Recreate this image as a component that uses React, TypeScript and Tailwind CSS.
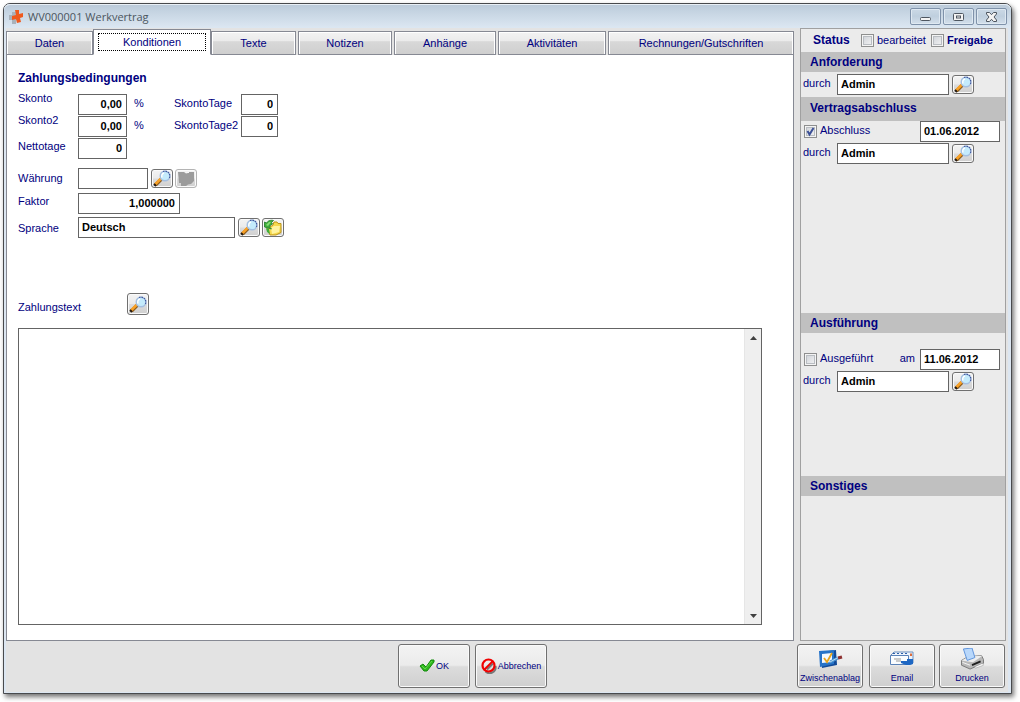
import { useId, useState } from 'react';
import type { ReactNode } from 'react';
import clsx from 'clsx';

const tabs = [
  { name: 'Daten', size: 'w-[87px]' },
  { name: 'Konditionen', size: 'w-[118px]' },
  { name: 'Texte', size: 'w-[85px]' },
  { name: 'Notizen', size: 'w-[94px] ml-0.5' },
  { name: 'Anhänge', size: 'w-[102px] ml-0.5' },
  { name: 'Aktivitäten', size: 'w-[108px] ml-0.5' },
  { name: 'Rechnungen/Gutschriften', size: 'flex-1 ml-0.5' },
];

const face = 'bg-[linear-gradient(#f3f3f3,#ebebeb_48%,#dcdcdc_52%,#cfcfcf)]';

export default function App() {
  const [tab, setTab] = useState('Konditionen');

  return (
    <div className="min-h-screen flex bg-white pt-[3px] pl-[3px] pr-2 pb-2 font-['Liberation_Sans',Arial,sans-serif] text-[11px] leading-3 text-[#000080]">
      <div className="flex-1 min-w-0 flex flex-col rounded-t-[7px] border border-[#484a4d] bg-[#dce6f1] shadow-[2px_3px_5px_rgba(0,0,0,0.55)]">
        <TitleBar />
        <div className="flex-1 flex flex-col ml-0.5 mr-[3px] mb-px bg-[#e3e3e3]">
          <div className="flex-1 flex gap-1.5 pr-0.5">
            <main className="flex-1 min-w-0 flex flex-col">
              <div role="tablist" className="flex items-end h-[27px] pt-px">
                {tabs.map((t) => (
                  <button
                    key={t.name}
                    type="button"
                    role="tab"
                    aria-selected={tab === t.name}
                    onClick={() => setTab(t.name)}
                    className={clsx(
                      'border border-[#868993]',
                      t.size,
                      tab === t.name
                        ? 'h-[26px] bg-white border-b-white p-1 pt-[3px]'
                        : 'h-6 shadow-[inset_1px_1px_0_#fff,inset_-1px_0_0_#fff] bg-[linear-gradient(#f3f3f3,#ebebeb_40%,#d8d8d8_44%,#cfcfcf)]',
                    )}
                  >
                    {tab === t.name ? (
                      <span className="block border border-dotted border-black leading-4">{t.name}</span>
                    ) : (
                      t.name
                    )}
                  </button>
                ))}
              </div>
              <Conditions />
            </main>
            <Sidebar />
          </div>
          <Footer />
        </div>
      </div>
    </div>
  );
}

function TitleBar() {
  return (
    <header className="flex items-start justify-between h-6 pl-[5px] pr-1 rounded-t-md bg-[linear-gradient(#b9c9d8,#c3d2e0_25%,#dce7f2)] shadow-[inset_0_1px_0_#e8eff6]">
      <div className="flex items-center h-[26px] gap-[5px]">
        <svg width="14" height="16" viewBox="0 0 14 16" aria-hidden="true">
          <path d="M3 3h4v3h3v5H7v4H3v-4H0V6h3z" fill="#a9b2bb" />
          <path d="M6 1h4v4l4-1v4l-3 1 1 4-4 1-1-4-4 1V7l4-1z" fill="#ef5a1e" />
        </svg>
        <h1 className="font-['Open_Sans','Noto_Sans',sans-serif] text-[11px] leading-4 text-[#4c5660]">WV000001 Werkvertrag</h1>
      </div>
      <div className="flex gap-0.5 pt-1">
        <WindowButton label="Minimieren">
          <rect x="1.5" y="6.5" width="10" height="3" rx="1" />
        </WindowButton>
        <WindowButton label="Maximieren">
          <rect x="1.5" y="2.5" width="10" height="7" rx="1" />
          <rect x="4.5" y="5" width="4" height="2" />
        </WindowButton>
        <WindowButton label="Schließen">
          <path d="M1.5 1.500h3l2 2.200 2-2.200h3v1.500L9 6l2.500 3v1.500h-3l-2-2.200-2 2.200h-3V9L4 6 1.500 3z" />
        </WindowButton>
      </div>
    </header>
  );
}

function WindowButton({ label, children }: { label: string; children: ReactNode }) {
  return (
    <button
      type="button"
      aria-label={label}
      className="flex items-center justify-center w-[31px] h-[17px] rounded-[2px] border border-[#7f92aa] bg-[linear-gradient(#cbd9e6,#bfcfde_48%,#d3dfeb)] shadow-[inset_0_0_0_1px_#dfe9f2]"
    >
      <svg width="13" height="12" viewBox="0 0 13 12" fill="#f4f4f4" stroke="#4e5660" strokeWidth="1">
        {children}
      </svg>
    </button>
  );
}

function Conditions() {
  return (
    <section className="flex-1 flex flex-col bg-white border border-t-0 border-[#868993] pt-[15px] pl-[11px] pr-[31px] pb-[15px]">
      <h2 className="text-[12px] leading-4 font-bold">Zahlungsbedingungen</h2>
      <div className="flex items-start mt-2">
        <div className="flex flex-col w-[60px] -mt-0.5">
          <label htmlFor="skonto">Skonto</label>
          <label htmlFor="skonto2" className="mt-2.5">Skonto2</label>
          <label htmlFor="netto" className="mt-3.5">Nettotage</label>
          <label htmlFor="waehrung" className="mt-5">Währung</label>
          <label htmlFor="faktor" className="mt-[11px]">Faktor</label>
          <label htmlFor="sprache" className="mt-[15px]">Sprache</label>
        </div>
        <div className="flex flex-col">
          <div className="flex">
            <Field id="skonto" value="0,00" className="w-[49px] text-right" />
            <span className="w-10 ml-[7px] pt-[3px]">%</span>
            <label htmlFor="tage" className="w-[67px] pt-[3px]">SkontoTage</label>
            <Field id="tage" value="0" className="w-[37px] text-right" />
          </div>
          <div className="flex mt-px">
            <Field id="skonto2" value="0,00" className="w-[49px] text-right" />
            <span className="w-10 ml-[7px] pt-[3px]">%</span>
            <label htmlFor="tage2" className="w-[67px] pt-[3px]">SkontoTage2</label>
            <Field id="tage2" value="0" className="w-[37px] text-right" />
          </div>
          <Field id="netto" value="0" className="w-[49px] text-right mt-px" />
          <div className="flex items-center gap-0.5 mt-[9px]">
            <Field id="waehrung" value="" className="w-[70px] mr-px" />
            <SearchButton label="Währung suchen" />
            <IconButton label="Währung übernehmen" disabled>
              <path d="M2 2h6l2 1.500 2-.5 1-1h5v9l-3 3-3 .5L10 16H5v-3H3z" fill="#9b9b9b" />
              <path d="M10 2.500h3" stroke="#f5f5f5" fill="none" />
            </IconButton>
          </div>
          <Field id="faktor" value="1,000000" className="w-[102px] text-right mt-1" />
          <div className="flex items-center gap-0.5 mt-[3px]">
            <Field id="sprache" value="Deutsch" className="w-[157px] mr-px" />
            <SearchButton label="Sprache suchen" />
            <IconButton label="Sprache übernehmen">
              <path d="M4 10l6-4 1-3h3l1 1.500h3v9l-5 2.500H7z" fill="#f6d94e" stroke="#bd9418" />
              <path d="M8 9l3-2h6l-1 6-7 2z" fill="#fff3a0" />
              <path d="M1.500 8V3l2 1c2-3 5-3 7-2.500l-2 2 1 1.500-2 1-1 2 2 2z" fill="#3fae3a" stroke="#217a28" strokeWidth=".8" />
              <path d="M3 6l3-3h2L5 7z" fill="#86dd75" />
              <path d="M3 9l3 1 1 5-3-2z" fill="#3fae3a" />
            </IconButton>
          </div>
        </div>
      </div>
      <div className="flex items-end mt-[55px]">
        <label htmlFor="text" className="w-[109px] pb-0.5">Zahlungstext</label>
        <SearchButton label="Zahlungstext suchen" tall />
      </div>
      <div className="flex-1 flex mt-[13px] border border-[#646464] bg-white">
        <textarea id="text" className="flex-1 min-w-0 resize-none p-1 text-black outline-none" />
        <div className="flex flex-col justify-between w-[17px] bg-[#efefef] border-l border-[#e6e6e6]">
          <button type="button" aria-label="Nach oben" className="flex items-center justify-center h-[17px]">
            <svg width="7" height="4" viewBox="0 0 7 4"><path d="M0 4L3.500 0 7 4z" fill="#404040" /></svg>
          </button>
          <button type="button" aria-label="Nach unten" className="flex items-center justify-center h-[17px]">
            <svg width="7" height="4" viewBox="0 0 7 4"><path d="M0 0L3.500 4 7 0z" fill="#404040" /></svg>
          </button>
        </div>
      </div>
    </section>
  );
}

function Sidebar() {
  return (
    <aside className="flex flex-col w-[206px] bg-[#ebebeb] border border-[#a0a0a0]">
      <div className="flex items-center h-[23px] pl-3">
        <h2 className="w-12 pb-0.5 text-[12px] font-bold">Status</h2>
        <Check label="bearbeitet" />
        <Check label="Freigabe" bold className="ml-[5px]" />
      </div>
      <GroupTitle>Anforderung</GroupTitle>
      <div className="pt-0.5 h-[25px]">
        <PersonRow id="anforderung" />
      </div>
      <GroupTitle tall>Vertragsabschluss</GroupTitle>
      <div className="h-48">
        <div className="flex items-center justify-between pl-[3px] pr-[5px]">
          <Check label="Abschluss" checked className="pb-px" />
          <Field label="Datum Abschluss" value="01.06.2012" className="w-20" />
        </div>
        <PersonRow id="abschluss" />
      </div>
      <GroupTitle>Ausführung</GroupTitle>
      <div className="h-[143px] pt-4">
        <div className="flex items-center pl-[3px] pr-[5px]">
          <Check label="Ausgeführt" className="pb-px" />
          <label htmlFor="am" className="ml-auto mr-[5px] pb-[3px]">am</label>
          <Field id="am" value="11.06.2012" className="w-20" />
        </div>
        <PersonRow id="ausfuehrung" />
      </div>
      <GroupTitle>Sonstiges</GroupTitle>
    </aside>
  );
}

function GroupTitle({ tall, children }: { tall?: boolean; children: ReactNode }) {
  return (
    <h2 className={clsx('pl-[9px] bg-[#c0c0c0] font-bold text-[12px]', tall ? 'h-6 leading-[22px]' : 'h-5 leading-5')}>
      {children}
    </h2>
  );
}

function PersonRow({ id }: { id: string }) {
  return (
    <div className="flex items-center pl-0.5 mt-px first:mt-0">
      <label htmlFor={id} className="w-[34px] pb-[3px]">durch</label>
      <Field id={id} value="Admin" className="w-28 mr-[3px]" />
      <SearchButton label="Person suchen" />
    </div>
  );
}

function Field({ id, label, value, className }: { id?: string; label?: string; value: string; className?: string }) {
  return (
    <input
      id={id}
      aria-label={label}
      type="text"
      defaultValue={value}
      className={clsx('h-[21px] pl-[3px] pr-1 pb-0.5 border border-[#646464] bg-white font-bold text-black outline-none', className)}
    />
  );
}

function Check({ label, checked, bold, className }: { label: string; checked?: boolean; bold?: boolean; className?: string }) {
  const id = useId();
  return (
    <span className={clsx('flex items-center gap-[3px]', className)}>
      <span className="grid">
        <input
          id={id}
          type="checkbox"
          defaultChecked={checked}
          className="peer col-start-1 row-start-1 appearance-none size-[13px] border border-[#8e8f8f] bg-[linear-gradient(135deg,#cbcfd5,#f6f6f6)] shadow-[inset_0_0_0_1px_#f4f4f4,inset_0_0_0_2px_#b9bdc2]"
        />
        <svg width="13" height="13" viewBox="0 0 13 13" className="col-start-1 row-start-1 pointer-events-none invisible peer-checked:visible">
          <path d="M3.500 6l2 3.500 4-6.500" fill="none" stroke="#3b4f96" strokeWidth="2" />
        </svg>
      </span>
      <label htmlFor={id} className={clsx('pb-0.5', bold && 'font-bold')}>{label}</label>
    </span>
  );
}

function IconButton({ label, tall, disabled, children }: { label: string; tall?: boolean; disabled?: boolean; children: ReactNode }) {
  return (
    <button
      type="button"
      aria-label={label}
      disabled={disabled}
      className={clsx(
        'flex items-center justify-center w-[22px] rounded-[3px] border shadow-[inset_0_0_0_1px_#fafafa]',
        face,
        tall ? 'h-[22px]' : 'h-[19px]',
        disabled ? 'border-[#b4b4b4]' : 'border-[#707070]',
      )}
    >
      <svg width="20" height="17" viewBox="0 0 20 17" className="shrink-0">{children}</svg>
    </button>
  );
}

function SearchButton({ label, tall }: { label: string; tall?: boolean }) {
  return (
    <IconButton label={label} tall={tall}>
      <path d="M3.500 15l6-6" stroke="#8a5a1c" strokeWidth="3.500" />
      <path d="M3 14.500l6-6" stroke="#f9a126" strokeWidth="2.500" />
      <path d="M2 14l2 2" stroke="#241a10" strokeWidth="2" />
      <circle cx="13" cy="6" r="4.800" fill="#c4ebfc" stroke="#a5bfe0" strokeWidth="1.400" />
      <path d="M11 1.500a5 5 0 0 1 6.500 6.500" fill="none" stroke="#3c559c" strokeWidth="1.200" strokeDasharray="1.500 1" />
      <path d="M10 7.500a3.500 3.500 0 0 1 2-4.500" fill="none" stroke="#fff" strokeWidth="1.500" />
    </IconButton>
  );
}

function Footer() {
  return (
    <footer className="flex justify-between gap-2 pt-[3px] pb-1 pr-[3px] text-[9px]">
      <div className="flex gap-[5px] ml-98">
        <ActionButton label="OK">
          <svg width="16" height="14" viewBox="0 0 16 14">
            <path d="M1 7l3-2 3 3 5-7h3v2L8 12H5z" fill="#2fb81d" stroke="#138a0c" strokeLinejoin="round" />
            <path d="M3 7l3 3 7-8" fill="none" stroke="#63d84c" />
          </svg>
        </ActionButton>
        <ActionButton label="Abbrechen">
          <svg width="16" height="16" viewBox="0 0 16 16" fill="none">
            <path d="M14.500 8a6 6 0 0 1-10 5.500M6 11.500l6-6" stroke="#777" strokeWidth="2" />
            <circle cx="7.500" cy="7.500" r="6" stroke="#f00000" strokeWidth="2.200" />
            <path d="M3.500 11.500l8-8" stroke="#f00000" strokeWidth="2" />
          </svg>
        </ActionButton>
      </div>
      <div className="flex">
        <ActionButton label="Zwischenablag" stacked>
          <svg width="26" height="22" viewBox="0 0 26 22">
            <path d="M4 4l15-2 1 15-15 3z" fill="#124a97" />
            <path d="M2 3l15-1v14L3 19z" fill="#2673c8" />
            <path d="M5 6l10-1v9L5 15z" fill="#f4f9ff" />
            <path d="M7 10l3 4 5-9" fill="none" stroke="#e9a51c" strokeWidth="1.800" />
            <path d="M13 14l8-4" stroke="#4a92d2" strokeWidth="3" />
            <path d="M13 14l9-5" stroke="#b9dcf2" />
            <path d="M21 10l4-1" stroke="#8e3030" strokeWidth="3" />
          </svg>
        </ActionButton>
        <ActionButton label="Email" stacked className="ml-1.5">
          <svg width="26" height="22" viewBox="0 0 26 22">
            <path d="M2 7l3-3h19v11l-2 1H2z" fill="#eef4fc" stroke="#6b8fbd" />
            <path d="M1.500 7.500h18v9h-18z" fill="#fafdff" stroke="#5a82b8" />
            <path d="M4 5.500h2m2 0h2m2 0h2m2 0h2" stroke="#2c5fa8" />
            <path d="M5 11h7M7 13h5" stroke="#999" />
            <path d="M12 13h6v-2h6v5l-3 1h-4l-5-2z" fill="#1e67c3" />
            <path d="M21 5.500h2v2.500h-2z" fill="#dc6c3b" />
          </svg>
        </ActionButton>
        <ActionButton label="Drucken" stacked className="ml-1">
          <svg width="26" height="22" viewBox="1 1 24 23">
            <path d="M2 14l7-4 14-1 2 4v4l-14 6-9-4z" fill="#b8b8b8" stroke="#777" />
            <path d="M2 14l8-4 14-1-10 7z" fill="#eee" />
            <path d="M4 2l9-1 3 10-8 3z" fill="#b9d8fb" stroke="#5c92da" />
            <path d="M13 19l9-4" stroke="#202020" strokeWidth="2" />
            <path d="M15 21l9-4 1 2-8 3z" fill="#fff" stroke="#888" strokeWidth=".5" />
            <path d="M3 16l8 3" stroke="#f7f7f7" />
          </svg>
        </ActionButton>
      </div>
    </footer>
  );
}

function ActionButton({ label, stacked, className, children }: { label: string; stacked?: boolean; className?: string; children: ReactNode }) {
  return (
    <button
      type="button"
      className={clsx(
        'flex items-center justify-center h-11 rounded-[3px] border border-[#707070] shadow-[inset_0_0_0_1px_#fafafa]',
        face,
        stacked ? 'flex-col w-[66px]' : 'w-[72px] gap-px',
        className,
      )}
    >
      {children}
      <span className={clsx('whitespace-nowrap', stacked && 'pt-px leading-[14px]')}>{label}</span>
    </button>
  );
}
